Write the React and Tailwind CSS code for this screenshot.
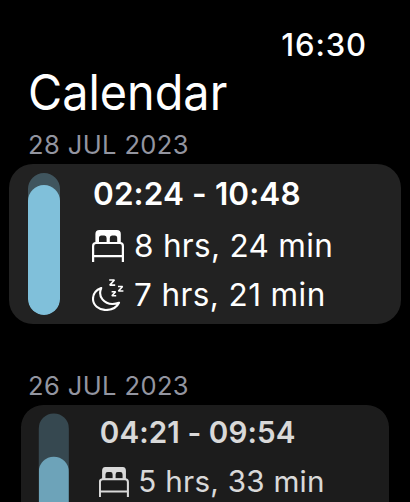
function BedIcon() {
  return (
    <svg viewBox="0 0 32 32" className="h-8 w-8 shrink-0" fill="none" stroke="currentColor">
      <path
        fill="currentColor"
        stroke="none"
        fillRule="evenodd"
        d="M3.4 13V4Q3.4 0 7.4 0H24.8Q28.8 0 28.8 4V13ZM7 12.2H14.6V8Q14.6 5.4 12.4 5.4H9.4Q7 5.4 7 8ZM17.8 12.2H25.2V8Q25.2 5.4 22.8 5.4H20Q17.8 5.4 17.8 8Z"
      />
      <path strokeWidth="2.2" d="M1.1 32V16Q1.1 13 4 13H28Q30.9 13 30.9 16V32M1 26.2H31" />
    </svg>
  );
}

function MoonIcon() {
  return (
    <svg viewBox="0 0 32 32" className="h-8 w-8 shrink-0" fill="none" stroke="currentColor">
      <path
        strokeWidth="2.1"
        strokeLinejoin="round"
        d="M9.2 9C4.4 10.8 1 15 1 20C1 26.1 6.6 31 13.8 31C19.8 31 24.8 28.5 27 23.8C24.6 24.8 22.6 25 20.4 25C12.6 25 5.4 18.2 9.2 9Z"
      />
      <path
        strokeWidth="1.6"
        strokeLinejoin="bevel"
        d="M17.2 1H22.4L17.8 6.1H23.2M26 7.5H30.6L26.4 12H31.4M19.6 12.7H23.6L19.9 16.7H24.2"
      />
    </svg>
  );
}

function SleepCard({ range, inBed, asleep, barClass }) {
  return (
    <div className="flex h-40 w-[392px] rounded-[24px] bg-[#222222] pt-[9px] pl-[19px]">
      <div className="flex h-[142px] w-8 flex-col justify-end overflow-hidden rounded-full bg-[#40555e]">
        <div className={`w-full rounded-full bg-[#80c0da] ${barClass}`} />
      </div>
      <div className="ml-8 whitespace-nowrap text-white">
        <div className="h-[41px] pl-px text-[31.5px] leading-[41px] font-semibold tracking-[0.1px]">{range}</div>
        <div className="mt-[7px] flex h-[49px] items-center">
          <BedIcon />
          <span className="ml-[10px] text-[31.5px] leading-[39px] tracking-[0.3px]">{inBed}</span>
        </div>
        {asleep && (
          <div className="flex h-[49px] items-center">
            <MoonIcon />
            <span className="ml-[10px] text-[31.5px] leading-[39px] tracking-[0.4px]">{asleep}</span>
          </div>
        )}
      </div>
    </div>
  );
}

function DateHeading({ children }) {
  return <h2 className="h-10 pt-px pl-[28px] text-[25.5px] leading-10 tracking-[0.4px] whitespace-nowrap text-[#9395a0]">{children}</h2>;
}

export default function App() {
  return (
    <main className="flex h-[502px] w-[410px] flex-col overflow-hidden bg-black font-['Inter',sans-serif]">
      <div className="flex h-[65px] shrink-0 justify-end pt-[25px] pr-[43px] text-[31px] leading-10 font-medium tracking-[0.9px] text-white">
        16:30
      </div>
      <h1 className="ml-[28px] h-[59px] w-fit shrink-0 origin-left scale-x-[0.955] text-[49px] leading-[55px] text-white">Calendar</h1>
      <section className="h-[241px] shrink-0">
        <DateHeading>28 JUL 2023</DateHeading>
        <div className="pl-[9px]">
          <SleepCard range="02:24 - 10:48" inBed="8 hrs, 24 min" asleep="7 hrs, 21 min" barClass="h-[130px]" />
        </div>
      </section>
      <section className="shrink-0">
        <DateHeading>26 JUL 2023</DateHeading>
        <div className="origin-top scale-[0.939] pl-[9px] opacity-85">
          <SleepCard range="04:21 - 09:54" inBed="5 hrs, 33 min" barClass="h-[96px]" />
        </div>
      </section>
    </main>
  );
}
